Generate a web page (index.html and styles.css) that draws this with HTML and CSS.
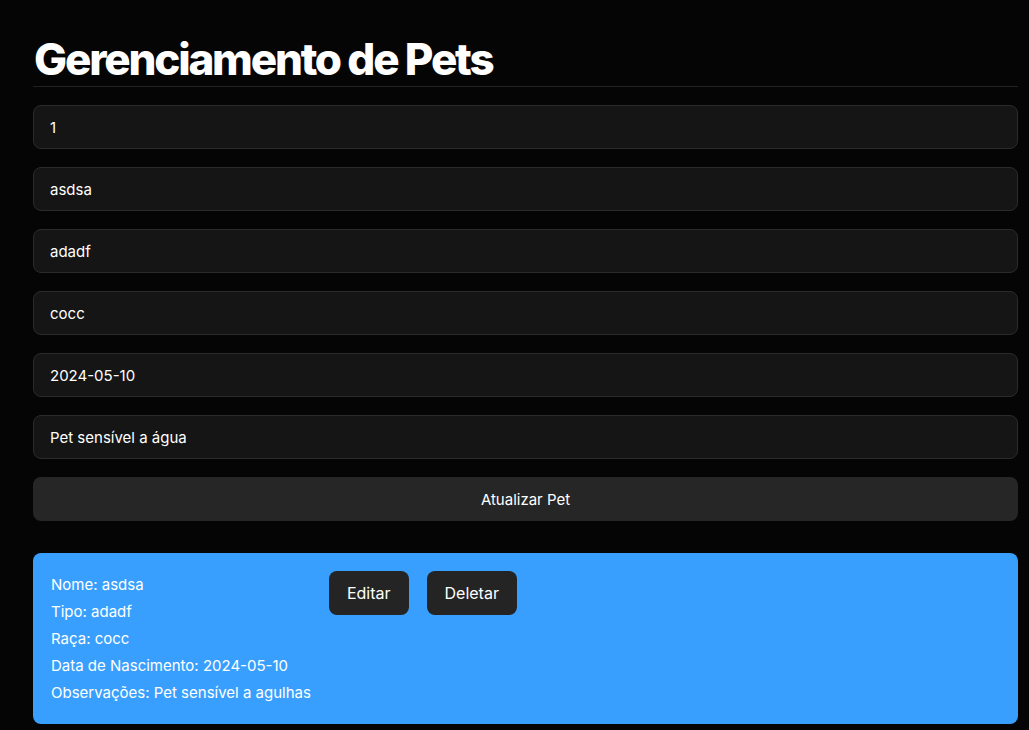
FILE: index.html
```html
<!DOCTYPE html>
<html lang="pt-BR">
<head>
<meta charset="utf-8">
<title>Gerenciamento de Pets</title>
<link rel="stylesheet" href="styles.css">
</head>
<body>
<main class="app">
  <h1 class="title">Gerenciamento de Pets</h1>
  <form class="form">
    <input class="field" type="text" value="1">
    <input class="field" type="text" value="asdsa">
    <input class="field" type="text" value="adadf">
    <input class="field" type="text" value="cocc">
    <input class="field" type="text" value="2024-05-10">
    <input class="field" type="text" value="Pet sensível a água">
    <button class="submit" type="button">Atualizar Pet</button>
  </form>
  <ul class="list">
    <li class="card">
      <div class="info">
        <p>Nome: asdsa</p>
        <p>Tipo: adadf</p>
        <p>Raça: cocc</p>
        <p>Data de Nascimento: 2024-05-10</p>
        <p>Observações: Pet sensível a agulhas</p>
      </div>
      <div class="actions">
        <button class="btn" type="button">Editar</button>
        <button class="btn" type="button">Deletar</button>
      </div>
    </li>
  </ul>
</main>
</body>
</html>
```
FILE: styles.css
```css
* { box-sizing: border-box; }
html, body { margin: 0; padding: 0; }
body {
  background: #050505;
  color: #fff;
  font-family: Inter, "Noto Sans", sans-serif;
  font-size: 15px;
}
.app {
  padding: 32px 11px 0 33px;
}
.title {
  margin: 0;
  font-size: 44px;
  font-weight: 800;
  letter-spacing: -2.2px;
  line-height: 54px;
  padding-left: 1px;
  border-bottom: 1px solid #222;
}
.form {
  display: flex;
  flex-direction: column;
  gap: 18px;
  margin-top: 18px;
}
.field {
  height: 44px;
  background: #151515;
  border: 1px solid #2b2b2b;
  border-radius: 8px;
  color: #fff;
  font-family: inherit;
  font-size: 15px;
  padding: 0 16px;
  outline: none;
}
.submit {
  height: 44px;
  background: #262626;
  border: none;
  border-radius: 8px;
  color: #fff;
  font-family: inherit;
  font-size: 15px;
}
.list {
  list-style: none;
  margin: 32px 0 0;
  padding: 0;
}
.card {
  display: flex;
  align-items: flex-start;
  gap: 18px;
  background: #399ffe;
  border-radius: 8px;
  padding: 18px;
}
.info p {
  margin: 0;
  line-height: 27px;
}
.actions {
  display: flex;
  gap: 18px;
}
.btn {
  height: 44px;
  padding: 0 18px;
  background: #242424;
  border: none;
  border-radius: 8px;
  color: #fff;
  font-family: inherit;
  font-size: 16px;
}
```
